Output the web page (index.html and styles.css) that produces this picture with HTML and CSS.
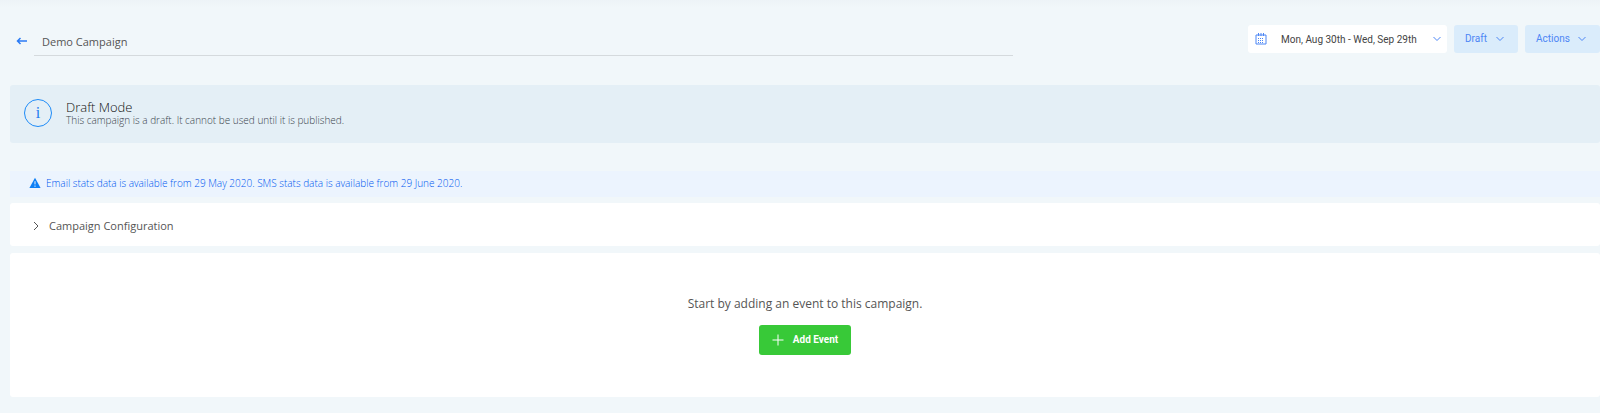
FILE: index.html
```html
<!DOCTYPE html>
<html lang="en">
<head>
    <meta charset="UTF-8">
    <meta name="viewport" content="width=device-width, initial-scale=1.0">
    <title>Demo Campaign</title>
    <link rel="stylesheet" href="styles.css">
</head>
<body>
    <header class="topbar">
        <form class="title-form">
            <a href="#" class="back" aria-label="Back">
                <svg width="12" height="10" viewBox="0 0 12 10"><path d="M11 5H1.5M4.5 2L1.5 5l3 3"/></svg>
            </a>
            <input type="text" class="title-input" name="campaignName" value="Demo Campaign" aria-label="Campaign name">
        </form>
        <div class="toolbar">
            <button type="button" class="date-picker">
                <svg class="calendar" width="12" height="12" viewBox="0 0 12 12">
                    <path d="M1 2h10v9H1zM3.500 0v3M6 0v3M8.500 0v3"/>
                    <path class="dots" d="M3 5.500h6M3 7.500h6M3 9.500h6"/>
                </svg>
                <span class="date-text">Mon, Aug 30th - Wed, Sep 29th</span>
                <svg class="chevron" width="8" height="6" viewBox="0 0 8 6"><path d="M.5 1L4 4.500 7.500 1"/></svg>
            </button>
            <button type="button" class="menu-button">
                Draft
                <svg class="chevron" width="8" height="6" viewBox="0 0 8 6"><path d="M.5 1L4 4.500 7.500 1"/></svg>
            </button>
            <button type="button" class="menu-button menu-button-last">
                Actions
                <svg class="chevron" width="8" height="6" viewBox="0 0 8 6"><path d="M.5 1L4 4.500 7.500 1"/></svg>
            </button>
        </div>
    </header>

    <main class="content">
        <section class="draft-banner">
            <span class="info-icon">i</span>
            <div>
                <h1 class="draft-title">Draft Mode</h1>
                <p class="draft-text">This campaign is a draft. It cannot be used until it is published.</p>
            </div>
        </section>

        <p class="stats-note">
            <svg width="12" height="12" viewBox="0 0 12 12">
                <path class="warn-fill" d="M6 .8L11.600 11H.4z"/>
                <path class="warn-mark" d="M6 4.200v3.200M6 8.500v1.300"/>
            </svg>
            Email stats data is available from 29 May 2020. SMS stats data is available from 29 June 2020.
        </p>

        <button type="button" class="config-toggle" aria-expanded="false">
            <svg width="6" height="10" viewBox="0 0 6 10"><path d="M1 1l4 4-4 4"/></svg>
            Campaign Configuration
        </button>

        <section class="events">
            <p class="events-text">Start by adding an event to this campaign.</p>
            <button type="button" class="add-button">
                <svg width="12" height="12" viewBox="0 0 12 12"><path d="M6 .5v11M.5 6h11"/></svg>
                Add Event
            </button>
        </section>
    </main>
</body>
</html>
```
FILE: styles.css
```css
*{
    box-sizing: border-box;
}
body{
    margin: 0;
    padding: 25px 0 16px 10px;
    background: #f1f7fa linear-gradient(#edf3f7, #f1f7fa) no-repeat 0 0 / 100% 8px;
    font-family: "Open Sans", "Noto Sans", sans-serif;
    color: #333;
}
h1, p{
    margin: 0;
}
button{
    border: 0;
    font-family: inherit;
    cursor: pointer;
}
svg{
    flex: none;
    fill: none;
    stroke: currentColor;
}

/* header */
.topbar{
    display: flex;
    justify-content: space-between;
    align-items: flex-start;
    margin-bottom: 29px;
}
.title-form{
    display: flex;
    align-items: center;
    width: 63.1%;
    padding-left: 6px;
}
.back{
    display: flex;
    width: 18px;
    color: #2b7bf5;
    stroke-width: 1.5;
}
.title-input{
    flex: 1;
    height: 31px;
    padding: 2px 8px 0;
    border: 0;
    border-bottom: 1px solid #d5dadd;
    background: none;
    font-family: inherit;
    font-size: 11px;
    color: #555;
}
.toolbar{
    display: flex;
    gap: 7px;
    font-family: Roboto, sans-serif;
}
.date-picker{
    display: flex;
    align-items: center;
    width: 199px;
    height: 28px;
    padding: 0 6px 0 7px;
    border-radius: 3px;
    background: #fff;
    font-size: 10px;
    color: #444;
}
.date-text{
    flex: 1;
    padding-left: 14px;
    text-align: left;
}
.calendar{
    color: #4d86f5;
}
.dots{
    stroke-dasharray: 1 1;
}
.chevron{
    color: #4d86f5;
}
.menu-button{
    display: flex;
    justify-content: space-between;
    align-items: center;
    width: 64px;
    height: 28px;
    padding: 0 14px 1px 11px;
    border-radius: 3px;
    background: #daecfb;
    font-size: 10px;
    color: #4d86f5;
}
.menu-button-last{
    width: 75px;
}

/* draft banner */
.draft-banner{
    display: flex;
    align-items: center;
    gap: 14px;
    height: 58px;
    margin-bottom: 28px;
    padding: 0 14px 2px;
    border-radius: 3px;
    background: #e4eff6;
}
.info-icon{
    width: 28px;
    height: 28px;
    border: 1px solid #1d8bf8;
    border-radius: 50%;
    font: 16px/26px "Liberation Serif", serif;
    text-align: center;
    color: #1b7bf0;
}
.draft-title{
    font-size: 13px;
    font-weight: 300;
    line-height: 14px;
    color: #111;
}
.draft-text{
    font-size: 10px;
    font-weight: 300;
    line-height: 12px;
    color: #3a444c;
}

/* stats note and configuration */
.stats-note{
    display: flex;
    align-items: center;
    gap: 5px;
    height: 26px;
    margin-bottom: 6px;
    padding: 0 19px 2px;
    background: #ecf4fe;
    font-size: 10px;
    font-weight: 300;
    color: #0058f0;
}
.warn-fill{
    fill: #0d7ff5;
    stroke: none;
}
.warn-mark{
    stroke: #ecf4fe;
}
.config-toggle{
    display: flex;
    align-items: center;
    gap: 10px;
    width: 100%;
    height: 43px;
    margin-bottom: 7px;
    padding: 2px 23px 0;
    border-radius: 3px;
    background: #fff;
    font-size: 11px;
    color: #555;
}

/* events */
.events{
    display: flex;
    flex-direction: column;
    align-items: center;
    gap: 12px;
    padding: 42px 0;
    border-radius: 3px;
    background: #fff;
}
.events-text{
    font-size: 12px;
    line-height: 18px;
    color: #555;
}
.add-button{
    display: flex;
    align-items: center;
    gap: 9px;
    height: 30px;
    padding: 0 13px 1px;
    border-radius: 3px;
    background: #38c938;
    font-family: Roboto, sans-serif;
    font-size: 10px;
    font-weight: 700;
    color: #fff;
}
```
